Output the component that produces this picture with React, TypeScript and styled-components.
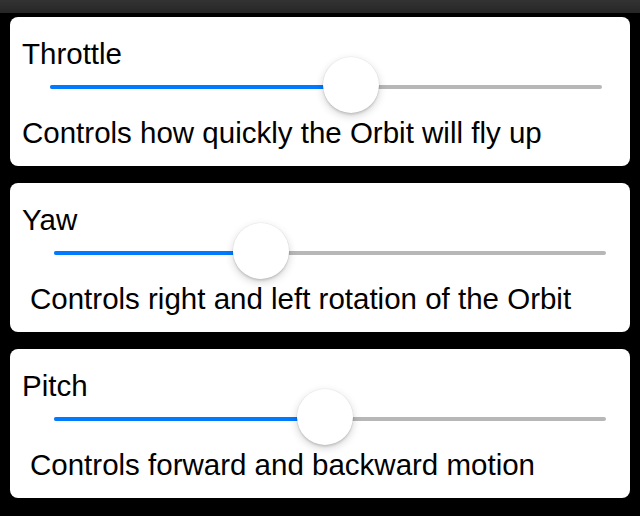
import * as React from "react";
import styled, {createGlobalStyle} from "styled-components";

interface Control {
  title: string
  description: string
  value: number
  inset: "narrow" | "wide"
}

const controls: Control[] = [
  { title: "Throttle", description: "Controls how quickly the Orbit will fly up", value: 0.545, inset: "narrow" },
  { title: "Yaw", description: "Controls right and left rotation of the Orbit", value: 0.375, inset: "wide" },
  { title: "Pitch", description: "Controls forward and backward motion", value: 0.491, inset: "wide" },
];

const GlobalStyle = createGlobalStyle`
  html, body {
    margin: 0;
    padding: 0;
    background: #000;
  }
  body {
    font-family: "Liberation Sans", Arial, Helvetica, sans-serif;
  }
`;

export default function App() {
  return <Screen>
    <GlobalStyle/>
    <StatusBar/>
    <CardList>
      {controls.map(c => <ControlCard key={c.title} control={c}/>)}
    </CardList>
  </Screen>;
}

const ControlCard = ({ control }: { control: Control }) =>
  <Card>
    <Title>{control.title}</Title>
    <SliderRow inset={control.inset}>
      <Track>
        <Filled style={{ width: `${control.value * 100}%` }}/>
        <Thumb style={{ left: `${control.value * 100}%` }}/>
      </Track>
    </SliderRow>
    <Description inset={control.inset}>{control.description}</Description>
  </Card>;

const Screen = styled.div`
  width: 640px;
  height: 516px;
  background: #000;
  display: flex;
  flex-direction: column;
  overflow: hidden;
`;

const StatusBar = styled.div`
  height: 13px;
  background: linear-gradient(#333333, #262626);
  flex-shrink: 0;
`;

const CardList = styled.div`
  display: flex;
  flex-direction: column;
  gap: 17px;
  padding: 4px 10px 17px;
`;

const Card = styled.div`
  background: #fff;
  border-radius: 8px;
  height: 149px;
  box-sizing: border-box;
  padding-top: 22px;
  display: flex;
  flex-direction: column;
`;

const Title = styled.div`
  font-size: 29.5px;
  line-height: 29px;
  color: #000;
  padding-left: 12px;
`;

const SliderRow = styled.div<{ inset: "narrow" | "wide" }>`
  height: 38px;
  display: flex;
  align-items: center;
  padding: 0 ${({ inset }) => inset === "narrow" ? 28 : 24}px 0 ${({ inset }) => inset === "narrow" ? 40 : 44}px;
`;

const Track = styled.div`
  position: relative;
  flex: 1;
  height: 4px;
  border-radius: 2px;
  background: #b7b7b7;
`;

const Filled = styled.div`
  height: 100%;
  border-radius: 2px;
  background: #007aff;
`;

const Thumb = styled.div`
  position: absolute;
  top: 50%;
  width: 56px;
  height: 56px;
  margin: -30px 0 0 -28px;
  border-radius: 50%;
  background: #fff;
  box-shadow: 0 0 0 0.5px rgba(0, 0, 0, 0.06),
              0 3px 8px rgba(0, 0, 0, 0.18),
              0 2px 2px rgba(0, 0, 0, 0.1);
`;

const Description = styled.div<{ inset: "narrow" | "wide" }>`
  margin-top: 10px;
  font-size: 29.5px;
  line-height: 34px;
  color: #000;
  padding-left: ${({ inset }) => inset === "narrow" ? 12 : 20}px;
  white-space: nowrap;
`;
